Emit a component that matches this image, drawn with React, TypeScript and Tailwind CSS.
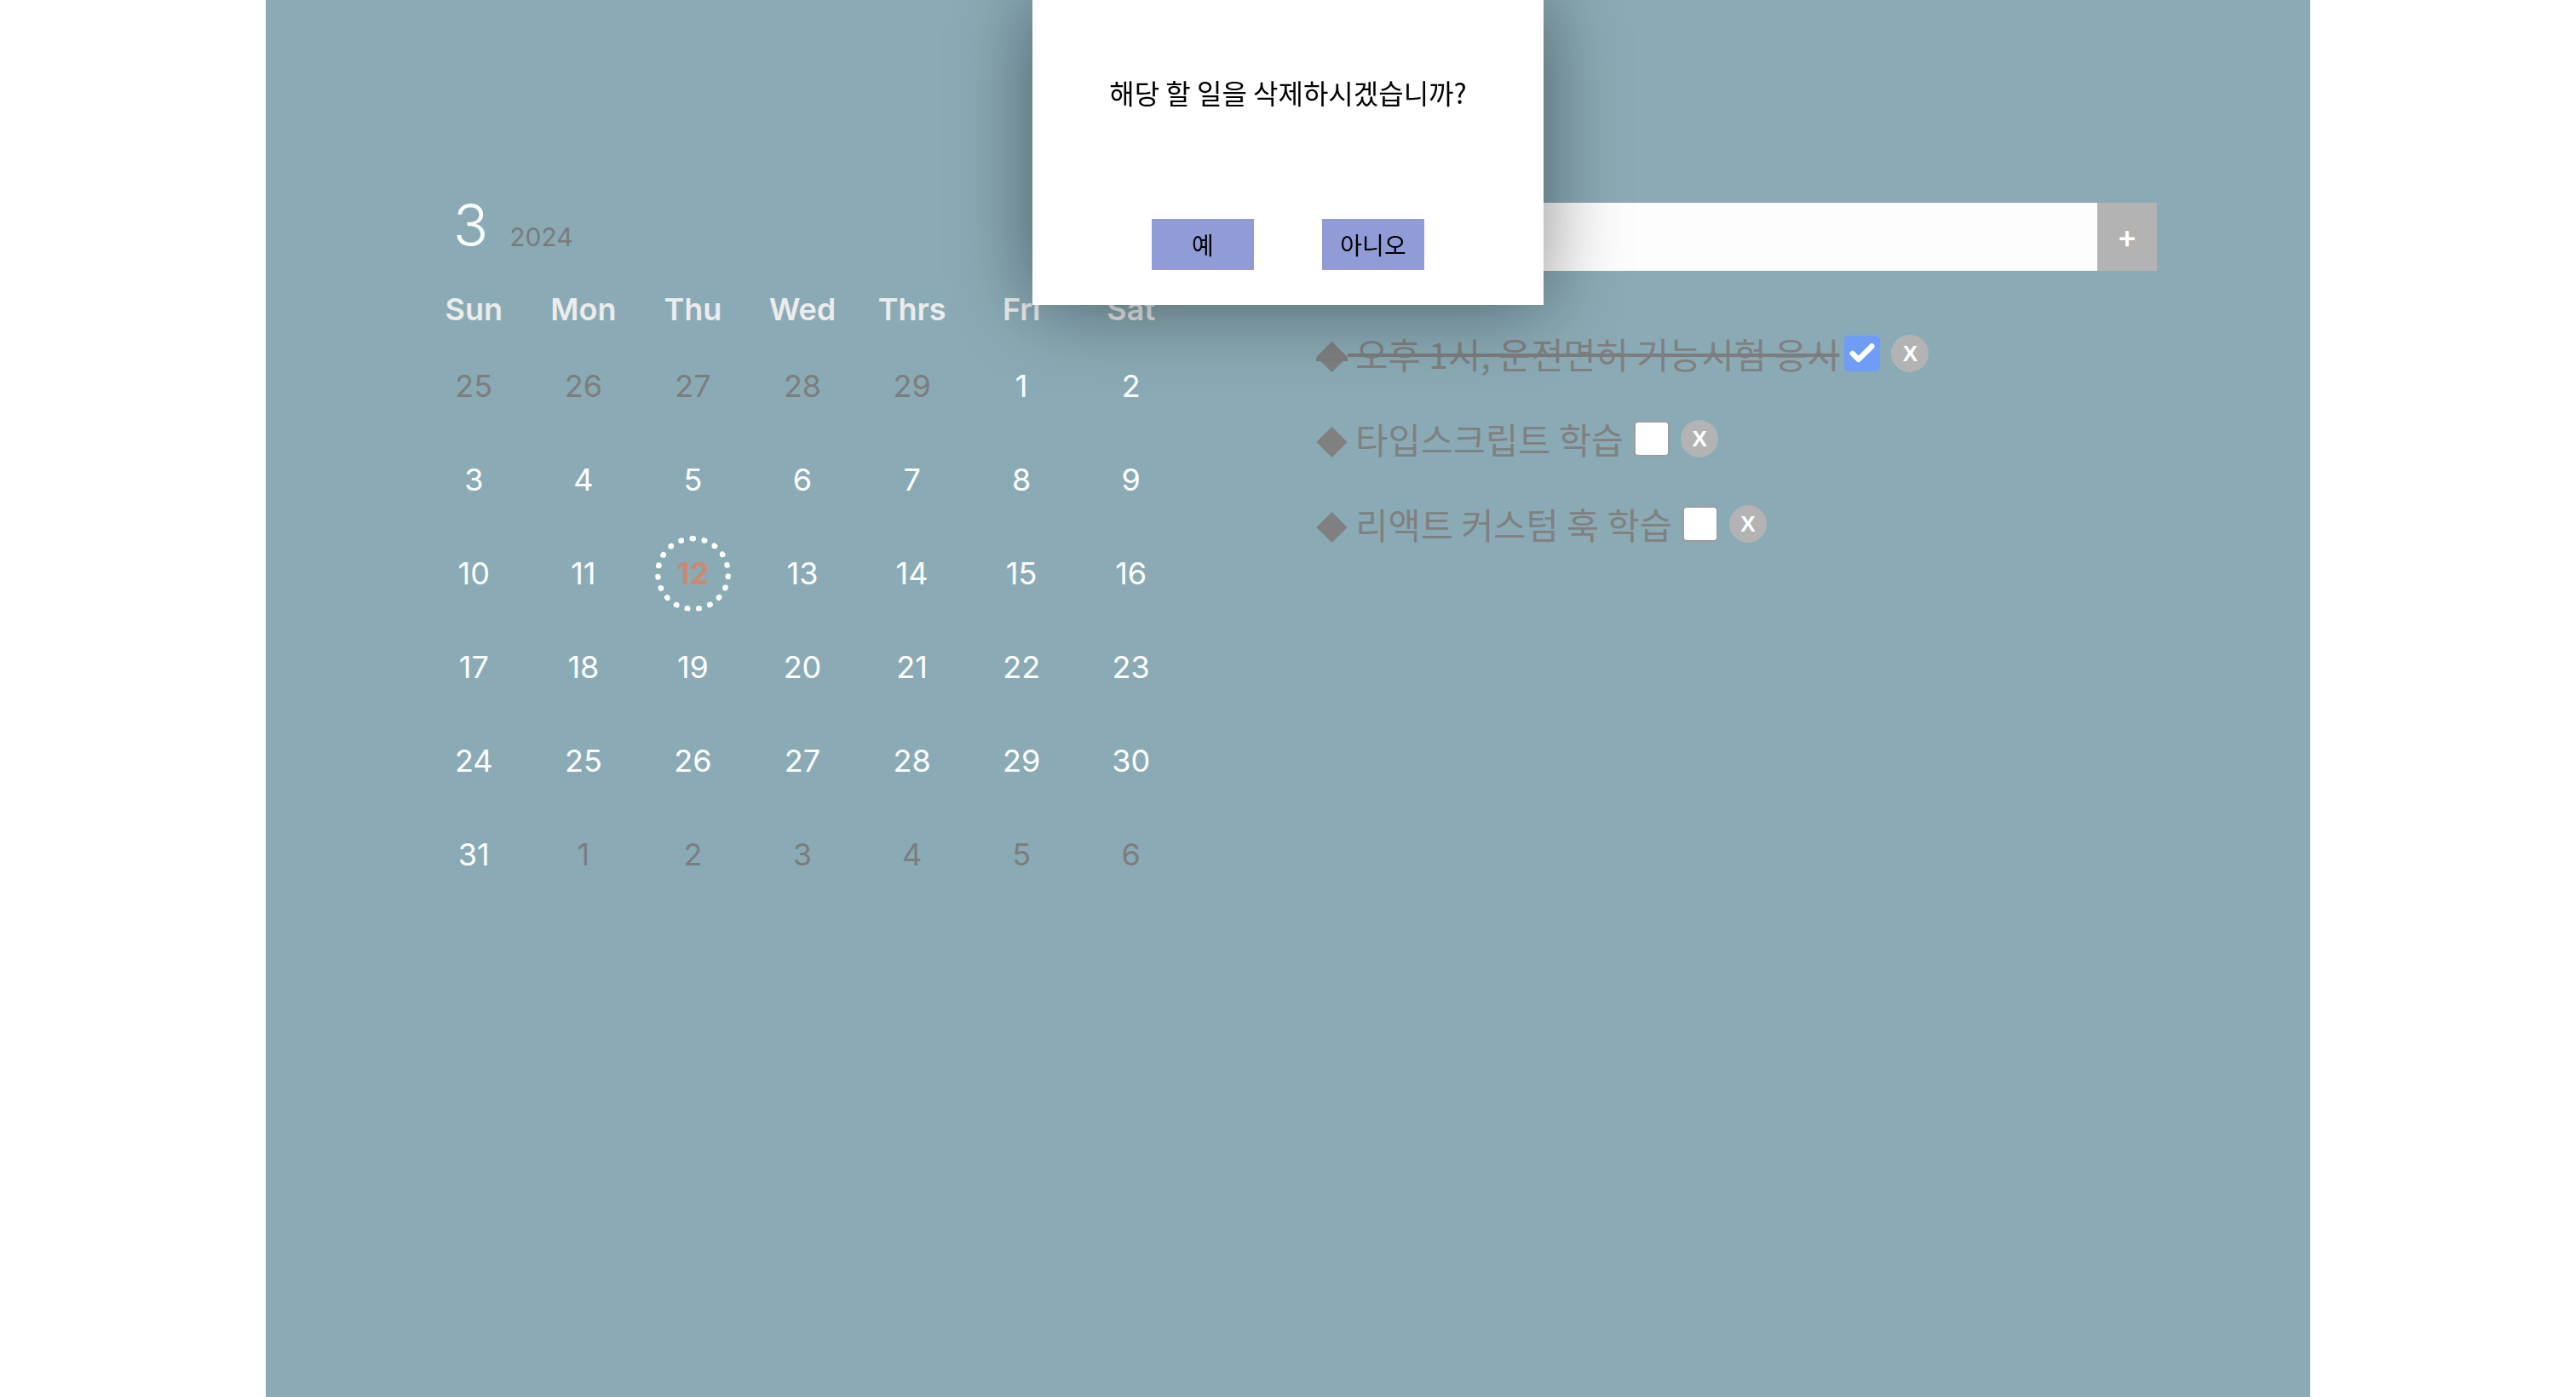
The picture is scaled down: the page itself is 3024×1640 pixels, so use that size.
import { Check } from 'lucide-react';

const days = ['Sun', 'Mon', 'Thu', 'Wed', 'Thrs', 'Fri', 'Sat'];

// March 2024, with trailing/leading days from neighbour months
const cells: { d: number; cur: boolean }[] = [
  ...[25, 26, 27, 28, 29].map((d) => ({ d, cur: false })),
  ...Array.from({ length: 31 }, (_, i) => ({ d: i + 1, cur: true })),
  ...[1, 2, 3, 4, 5, 6].map((d) => ({ d, cur: false })),
];

const todos = [
  { id: 1, text: '오후 1시, 운전면허 기능시험 응시', done: true },
  { id: 2, text: '타입스크립트 학습', done: false },
  { id: 3, text: '리액트 커스텀 훅 학습', done: false },
];

const Calendar = () => {
  return (
    <div className="w-[900px] font-['Inter',sans-serif]">
      <div className="h-[90px] flex items-start">
        <div className="flex items-baseline pl-[40px] -mt-[8px]">
          <span className="text-[68px] font-light text-white leading-none">3</span>
          <span className="ml-[25px] text-[30px] text-[#7b7b7b] leading-none">2024</span>
        </div>
      </div>
      <div className="grid grid-cols-7">
        {days.map((d) => (
          <div key={d} className="h-[70px] flex items-center justify-center text-[36px] font-semibold text-[#ececec]">
            {d}
          </div>
        ))}
        {cells.map((c, i) => {
          const today = c.cur && c.d === 12;
          return (
            <div key={i} className="h-[110px] flex items-center justify-center">
              {today ? (
                <div className="w-[89px] h-[89px] rounded-full border-[7px] border-dotted border-white flex items-center justify-center text-[36px] font-bold text-[#c98a72]">
                  {c.d}
                </div>
              ) : (
                <span className={`text-[36px] ${c.cur ? 'text-white' : 'text-[#7d7d7d]'}`}>{c.d}</span>
              )}
            </div>
          );
        })}
      </div>
    </div>
  );
};

const TodoList = () => {
  return (
    <div className="w-[987px] font-['Noto_Sans_CJK_KR','Noto_Sans',sans-serif]">
      <div className="flex h-[80px]">
        <input className="flex-1 bg-[#fdfdfd] outline-none px-4 text-[30px]" />
        <button className="w-[70px] bg-[#b3b3b3] text-white text-[34px] font-bold flex items-center justify-center">+</button>
      </div>
      <ul className="mt-[47px]">
        {todos.map((t) => (
          <li key={t.id} className="h-[100px] flex items-center">
            <span
              className={`text-[41.5px] text-[#808080] ${t.done ? 'line-through decoration-4 decoration-[#7d7d7d]' : ''}`}
            >
              <span className="text-[37px]">◆</span> {t.text}
            </span>
            {t.done ? (
              <span className="ml-[6px] w-[42px] h-[42px] rounded-[5px] bg-[#6e9cf7] flex items-center justify-center">
                <Check className="text-white" size={34} strokeWidth={4.5} />
              </span>
            ) : (
              <span className="ml-[12px] w-[42px] h-[42px] rounded-[5px] bg-white border-2 border-[#9c9c9c]" />
            )}
            <button className="ml-[13px] w-[44px] h-[44px] rounded-full bg-[#b3b3b3] text-white text-[26px] font-bold font-['Liberation_Sans',sans-serif] flex items-center justify-center leading-none">
              X
            </button>
          </li>
        ))}
      </ul>
    </div>
  );
};

const ConfirmDialog = () => {
  return (
    <div className="fixed top-0 left-1/2 -translate-x-1/2 w-[600px] h-[358px] bg-white shadow-[0_0_90px_rgba(0,0,0,0.45)] flex flex-col items-center font-['Noto_Sans_CJK_KR','Noto_Sans',sans-serif]">
      <p className="mt-[86px] text-[32px] text-black leading-[44px]">해당 할 일을 삭제하시겠습니까?</p>
      <div className="mt-[127px] flex gap-[80px]">
        <button className="w-[120px] h-[60px] bg-[#919cd7] text-[28px] text-black">예</button>
        <button className="w-[120px] h-[60px] bg-[#919cd7] text-[28px] text-black">아니오</button>
      </div>
    </div>
  );
};

export default function App() {
  return (
    <div className="min-h-screen h-[1640px] bg-white flex justify-center">
      <div className="w-[2400px] h-full bg-[#8aabb5] flex justify-between px-[180px] pt-[238px]">
        <Calendar />
        <TodoList />
      </div>
      <ConfirmDialog />
    </div>
  );
}
